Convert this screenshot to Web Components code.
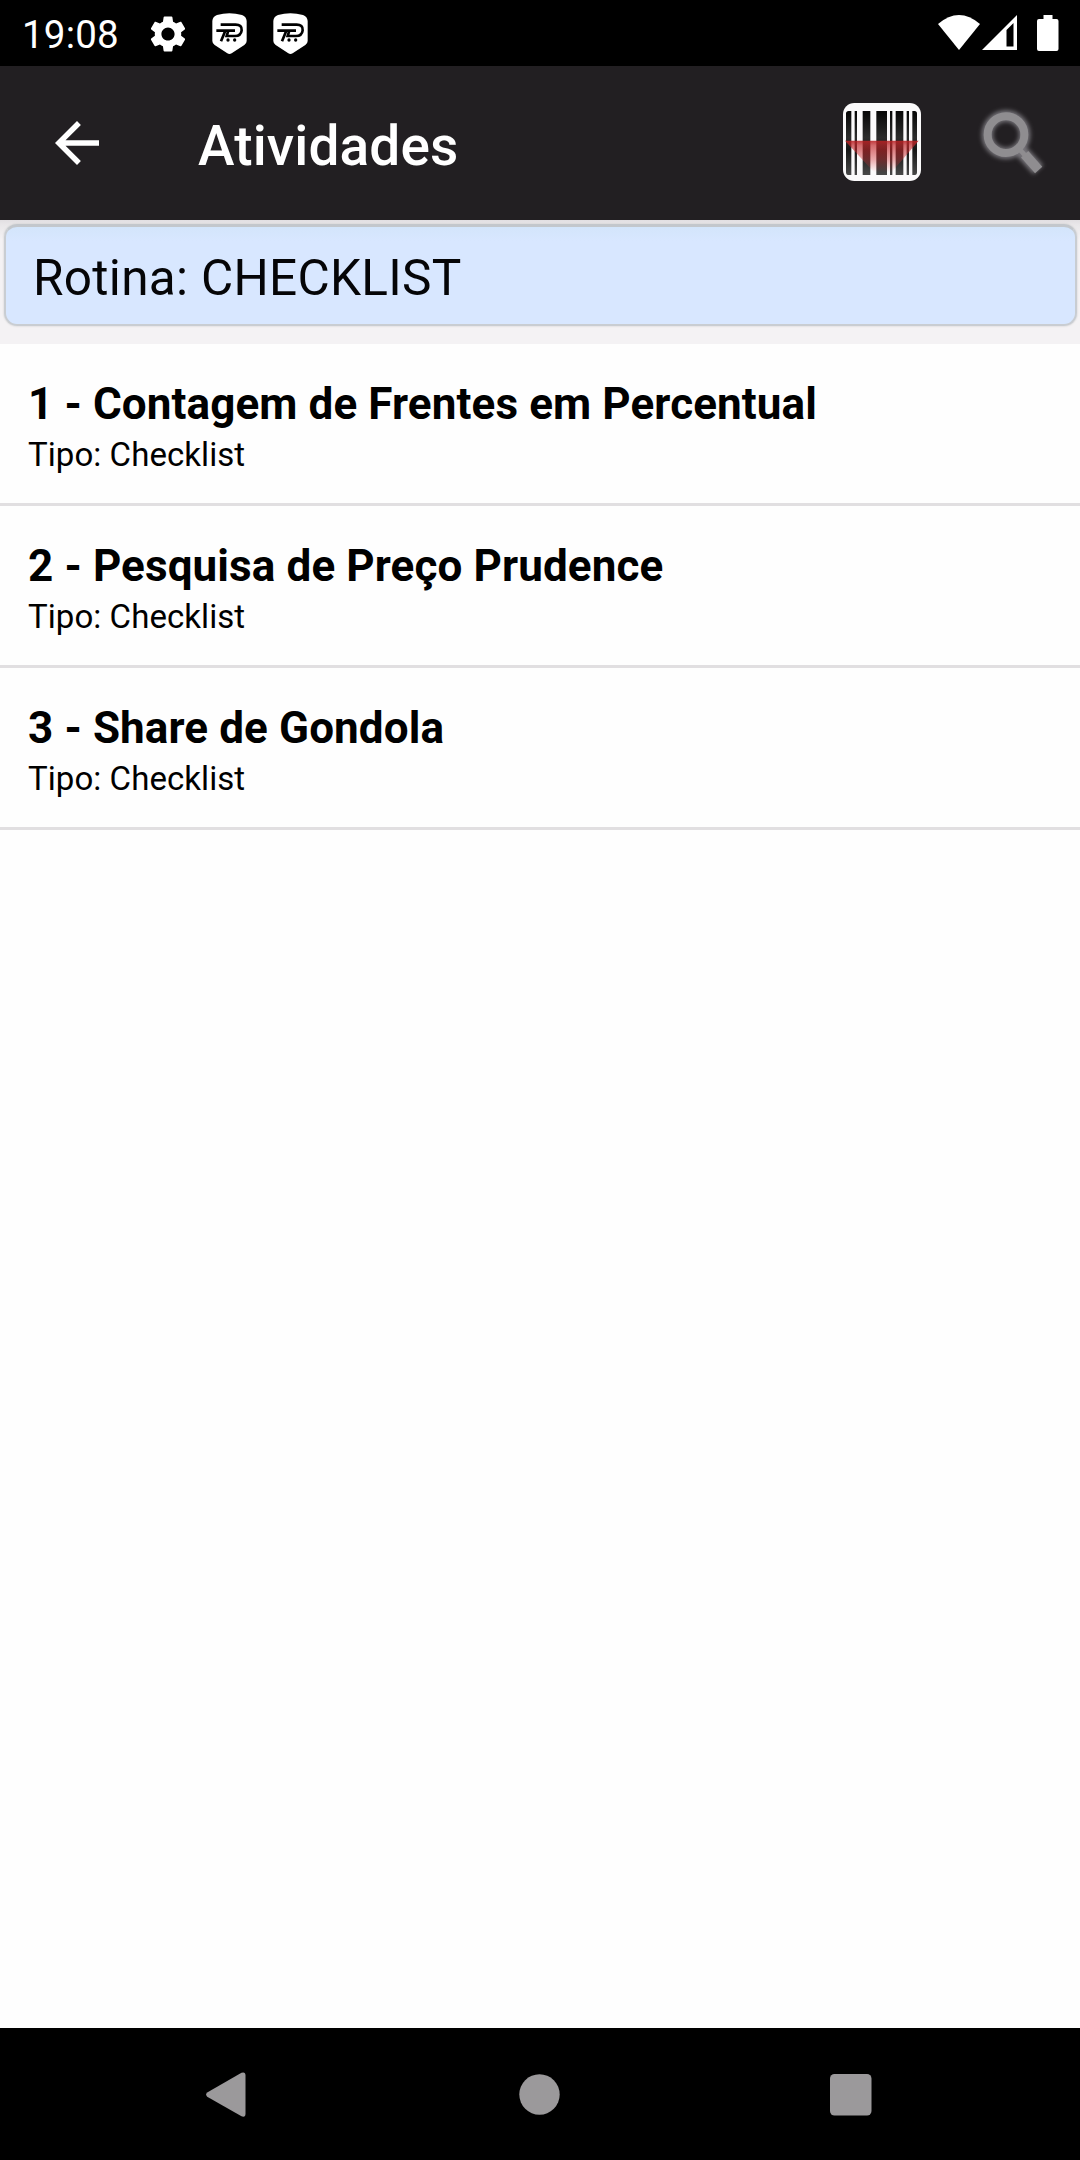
<!DOCTYPE html>
<html lang="pt-BR">
<head>
<meta charset="utf-8">
<title>Atividades</title>
<style>
    body {
        margin: 0;
        background: #fefefe;
        font-family: Roboto, "Liberation Sans", sans-serif;
    }
</style>
</head>
<body>
<activities-screen></activities-screen>

<script>
const icons = {
    gear: `<svg width="44" height="44" viewBox="0 0 24 24" fill="#fff"><path d="M19.14 12.94c.04-.3.06-.61.06-.94 0-.32-.02-.64-.07-.94l2.03-1.58c.18-.14.23-.41.12-.61l-1.92-3.32c-.12-.22-.37-.29-.59-.22l-2.39.96c-.5-.38-1.03-.7-1.62-.94l-.36-2.54c-.04-.24-.24-.41-.48-.41h-3.84c-.24 0-.43.17-.47.41l-.36 2.54c-.59.24-1.13.57-1.62.94l-2.39-.96c-.22-.08-.47 0-.59.22L2.74 8.87c-.12.21-.08.47.12.61l2.03 1.58c-.05.3-.09.63-.09.94s.02.64.07.94l-2.03 1.58c-.18.14-.23.41-.12.61l1.92 3.32c.12.22.37.29.59.22l2.39-.96c.5.38 1.03.7 1.62.94l.36 2.54c.05.24.24.41.48.41h3.84c.24 0 .44-.17.47-.41l.36-2.54c.59-.24 1.13-.56 1.62-.94l2.39.96c.22.08.47 0 .59-.22l1.92-3.32c.12-.22.07-.47-.12-.61l-2.01-1.58zM12 15.6c-1.98 0-3.6-1.62-3.6-3.6s1.62-3.6 3.6-3.6 3.6 1.62 3.6 3.6-1.62 3.6-3.6 3.6z"/></svg>`,
    shield: `<svg width="35" height="42" viewBox="635 38 105 126"><path fill="#fff" d="M636 62Q637 49 650 44Q687 34 725 44Q738 49 739 62V122Q739 129 732 134L694 159Q687 163 681 159L643 134Q636 129 636 122Z"/><g fill="none" stroke="#000" stroke-width="8"><path d="M661 73H706Q725 73 724 90Q722 107 704 107H679L684 91"/><path d="M648 91H704M675 91L662 123"/></g><circle cx="683" cy="119" r="5"/><circle cx="703" cy="119" r="5"/></svg>`,
    wifi: `<svg width="42" height="36" viewBox="0 0 42 36"><path fill="#fff" d="M0 9Q21-9 42 9L21 35Z"/></svg>`,
    signal: `<svg width="36" height="36" viewBox="0 0 36 36"><path fill="#fff" fill-rule="evenodd" d="M0 35L35 0V35ZM24.5 15V31.5H31.5V8Z"/></svg>`,
    battery: `<svg width="22" height="36" viewBox="0 0 22 36"><path fill="#fff" d="M6.5 0H15.5V4H19.5Q21.500 4 21.500 6V34Q21.500 36 19.500 36H2Q0 36 0 34V6Q0 4 2 4H6.500Z"/></svg>`,
    back: `<svg width="66" height="66" viewBox="0 0 24 24" fill="#fff"><path d="M20 11H7.830l5.590-5.590L12 4l-8 8 8 8 1.410-1.410L7.830 13H20v-2z"/></svg>`,
    barcode: `<svg width="78" height="78" viewBox="69 67 234 234">
        <defs>
            <linearGradient id="ink" x1="0" y1="91" x2="0" y2="283" gradientUnits="userSpaceOnUse"><stop offset="0" stop-color="#060606"/><stop offset=".42" stop-color="#2c2c2c"/><stop offset=".6" stop-color="#151515"/><stop offset="1" stop-color="#484848"/></linearGradient>
            <linearGradient id="beam" x1="0" y1="180" x2="0" y2="275" gradientUnits="userSpaceOnUse"><stop offset="0" stop-color="#b81f22" stop-opacity=".88"/><stop offset=".15" stop-color="#c02528" stop-opacity=".68"/><stop offset=".6" stop-color="#d03034" stop-opacity=".4"/><stop offset="1" stop-color="#e04444" stop-opacity="0"/></linearGradient>
        </defs>
        <rect x="69" y="67" width="234" height="234" rx="34" fill="#fbfafb"/>
        <path fill="url(#ink)" d="M86 91H94V283H84Q78 283 78 274V99Q78 91 86 91ZM104 91h7v192h-7ZM128 91h23v192h-23ZM169 91h32v192h-32ZM210 91h7v192h-7ZM227 91h23v192h-23ZM260 91h7v192h-7ZM277 91h7Q291 91 291 99V274Q291 283 285 283H277Z"/>
        <path fill="url(#beam)" d="M75 180H296L215 275H162Z"/>
    </svg>`,
    search: `<svg width="74" height="74" viewBox="470 75 222 222">
        <defs>
            <filter id="glow" x="-20%" y="-20%" width="140%" height="140%"><feGaussianBlur stdDeviation="6"/></filter>
            <filter id="soft" x="-20%" y="-20%" width="140%" height="140%"><feGaussianBlur stdDeviation="2"/></filter>
        </defs>
        <g fill="none" stroke="#77757a" filter="url(#glow)"><circle cx="557" cy="161" r="56" stroke-width="34"/><path d="M605 213L654 266" stroke-width="40"/></g>
        <g fill="none" stroke="#8f8d90" filter="url(#soft)"><circle cx="557" cy="161" r="55" stroke-width="24"/><path d="M594 201L615 224" stroke-width="14"/><path d="M613 220L655 267" stroke-width="29"/></g>
    </svg>`,
    navBack: `<svg width="40" height="46" viewBox="0 0 40 46"><path fill="#9b999b" d="M1.200 20.500L35.500.8Q39.500-.5 39.500 3.500V41.500Q39.500 45.800 35.500 44.300L1.200 24.700Q-1 22.600 1.200 20.500Z"/></svg>`,
    navHome: `<svg width="41" height="41" viewBox="0 0 41 41"><circle cx="20.500" cy="20.500" r="20.200" fill="#9b999b"/></svg>`,
    navRecent: `<svg width="42" height="42" viewBox="0 0 42 42"><rect width="41.500" height="41.500" rx="4.500" fill="#9b999b"/></svg>`
};

class BaseElement extends HTMLElement {
    constructor() {
        super();
        this.attachShadow({ mode: 'open' });
    }

    connectedCallback() {
        const template = document.createElement('template');
        template.innerHTML = this.getStyles() + this.getTemplate();
        this.shadowRoot.replaceChildren(template.content.cloneNode(true));
    }
}

class UiIcon extends BaseElement {
    getTemplate() {
        return icons[this.getAttribute('name')] || '';
    }

    getStyles() {
        return `
        <style>
            :host { display: block; flex: none; }
            svg { display: block; }
        </style>`;
    }
}

class StatusBar extends BaseElement {
    getTemplate() {
        return `
            <time><slot></slot></time>
            <ui-icon class="gear" name="gear"></ui-icon>
            <ui-icon class="shield" name="shield"></ui-icon>
            <ui-icon class="shield second" name="shield"></ui-icon>
            <div class="system">
                <ui-icon name="wifi"></ui-icon>
                <ui-icon name="signal"></ui-icon>
                <ui-icon class="battery" name="battery"></ui-icon>
            </div>`;
    }

    getStyles() {
        return `
        <style>
            :host {
                display: flex;
                align-items: center;
                height: 66px;
                padding: 0 21px 0 22px;
                box-sizing: border-box;
                background: #000;
                color: #fff;
            }
            time { width: 124px; font-size: 38.5px; line-height: 46px; letter-spacing: 0.2px; padding-top: 3px; }
            .gear { width: 44px; padding-top: 1px; }
            .shield { margin-left: 22px; padding-top: 1px; }
            .shield.second { margin-left: 26px; }
            .system { display: flex; gap: 2px; margin-left: auto; }
            .battery { margin-left: 17px; }
        </style>`;
    }
}

class AppBar extends BaseElement {
    getTemplate() {
        return `
            <ui-icon name="back"></ui-icon>
            <h1><slot></slot></h1>
            <ui-icon name="barcode"></ui-icon>
            <ui-icon class="search" name="search"></ui-icon>`;
    }

    getStyles() {
        return `
        <style>
            :host {
                display: flex;
                align-items: center;
                height: 154px;
                padding: 0 29px 0 44px;
                box-sizing: border-box;
                background: #221f22;
                color: #fff;
            }
            h1 {
                flex: 1;
                margin: 0 0 0 88px;
                padding-top: 6px;
                font-size: 55px;
                font-weight: 500;
                letter-spacing: 0.15px;
                line-height: 64px;
            }
            ui-icon[name="barcode"] { margin-bottom: 3px; }
            .search { margin: 0 0 1px 56px; }
        </style>`;
    }
}

class RoutineBanner extends BaseElement {
    getTemplate() {
        return `<div class="box"><slot></slot></div>`;
    }

    getStyles() {
        return `
        <style>
            :host {
                display: block;
                height: 124px;
                padding: 4px 3px 0 4px;
                box-sizing: border-box;
                background: linear-gradient(#e2dfe2, #e9e7e9 5px, #f4f2f4 20px);
            }
            .box {
                height: 102px;
                padding: 5px 28px 0 27px;
                box-sizing: border-box;
                border: 2px solid #c9cdd2;
                border-top: 3px solid #c3c7cc;
                border-radius: 13px;
                background: linear-gradient(#d3e5fb, #d8e7ff 14px);
                box-shadow: 0 0 2px #c4c4c4;
                color: #050507;
                font-size: 49.5px;
                letter-spacing: 0.3px;
                line-height: 92px;
            }
        </style>`;
    }
}

class ActivityItem extends BaseElement {
    getTemplate() {
        return `
            <h2><slot></slot></h2>
            <p>Tipo: <slot name="type"></slot></p>`;
    }

    getStyles() {
        return `
        <style>
            :host {
                display: block;
                height: 162px;
                padding: 34px 28px 0;
                box-sizing: border-box;
                border-bottom: 3px solid #e1dfe1;
                color: #000;
            }
            h2 { margin: 0; font-size: 44px; font-weight: 700; line-height: 52px; letter-spacing: 0.11px; }
            p { margin: 5px 0 0; font-size: 33px; line-height: 40px; letter-spacing: 0.06px; }
        </style>`;
    }
}

class NavigationBar extends BaseElement {
    getTemplate() {
        return `
            <ui-icon name="navBack"></ui-icon>
            <ui-icon name="navHome"></ui-icon>
            <ui-icon name="navRecent"></ui-icon>`;
    }

    getStyles() {
        return `
        <style>
            :host {
                display: flex;
                align-items: center;
                justify-content: space-between;
                height: 132px;
                padding: 1px 208px 0 206px;
                box-sizing: border-box;
                background: #000;
            }
            ui-icon[name="navHome"] { margin-left: 3px; }
        </style>`;
    }
}

class ActivitiesScreen extends BaseElement {
    getTemplate() {
        return `
            <status-bar>19:08</status-bar>
            <app-bar>Atividades</app-bar>
            <routine-banner>Rotina: CHECKLIST</routine-banner>
            <main>
                <activity-item>1 - Contagem de Frentes em Percentual<span slot="type">Checklist</span></activity-item>
                <activity-item>2 - Pesquisa de Preço Prudence<span slot="type">Checklist</span></activity-item>
                <activity-item>3 - Share de Gondola<span slot="type">Checklist</span></activity-item>
            </main>
            <navigation-bar></navigation-bar>`;
    }

    getStyles() {
        return `
        <style>
            :host { display: flex; flex-direction: column; width: 1080px; height: 2160px; }
            main { flex: 1; background: #fefefe; }
        </style>`;
    }
}

customElements.define('ui-icon', UiIcon);
customElements.define('status-bar', StatusBar);
customElements.define('app-bar', AppBar);
customElements.define('routine-banner', RoutineBanner);
customElements.define('activity-item', ActivityItem);
customElements.define('navigation-bar', NavigationBar);
customElements.define('activities-screen', ActivitiesScreen);
</script>
</body>
</html>
